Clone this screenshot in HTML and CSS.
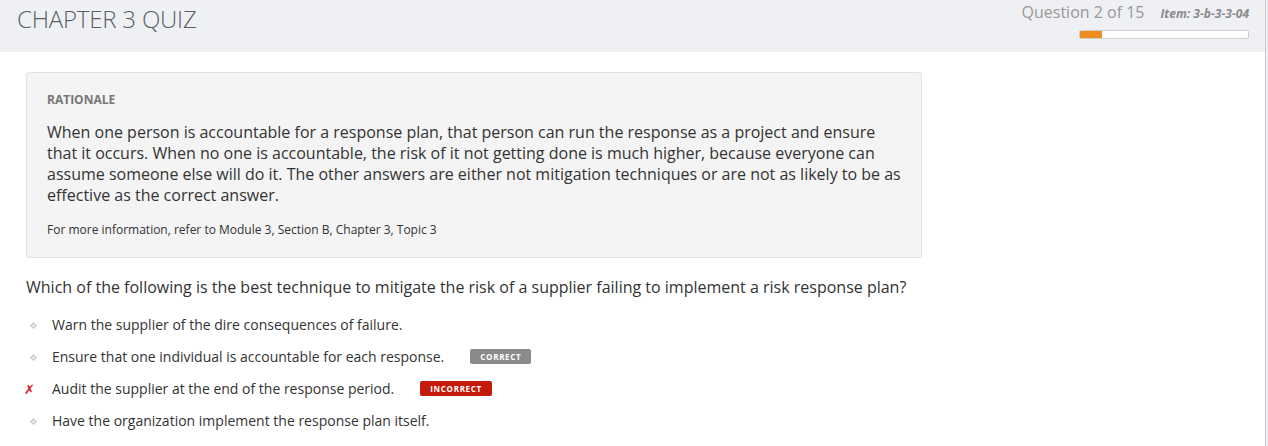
FILE: index.html
```html
<!DOCTYPE html>
<html lang="en">
<head>
<meta charset="utf-8">
<title>Chapter 3 Quiz</title>
<link rel="stylesheet" href="styles.css">
</head>
<body>
<div class="page">
  <header class="topbar">
    <h1 class="title">CHAPTER 3 QUIZ</h1>
    <div class="status">
      <div class="status-line">
        <span class="counter">Question 2 of 15</span>
        <span class="item">Item: 3-b-3-3-04</span>
      </div>
      <div class="progress"><div class="progress-fill" style="width:13.3%"></div></div>
    </div>
  </header>
  <main class="content">
    <section class="rationale">
      <h2 class="rationale-title">RATIONALE</h2>
      <p class="rationale-text">When one person is accountable for a response plan, that person can run the response as a project and ensure that it occurs. When no one is accountable, the risk of it not getting done is much higher, because everyone can assume someone else will do it. The other answers are either not mitigation techniques or are not as likely to be as effective as the correct answer.</p>
      <p class="rationale-ref">For more information, refer to Module 3, Section B, Chapter 3, Topic 3</p>
    </section>
    <p class="question">Which of the following is the best technique to mitigate the risk of a supplier failing to implement a risk response plan?</p>
    <ul class="answers">
      <li class="answer"><span class="mark"><span class="dot"></span></span><span class="answer-text">Warn the supplier of the dire consequences of failure.</span></li>
      <li class="answer"><span class="mark"><span class="dot"></span></span><span class="answer-text">Ensure that one individual is accountable for each response.</span><span class="badge badge-correct">CORRECT</span></li>
      <li class="answer"><span class="mark mark-x">&#10007;</span><span class="answer-text">Audit the supplier at the end of the response period.</span><span class="badge badge-incorrect">INCORRECT</span></li>
      <li class="answer"><span class="mark"><span class="dot"></span></span><span class="answer-text">Have the organization implement the response plan itself.</span></li>
    </ul>
  </main>
</div>
</body>
</html>
```

FILE: styles.css
```css
* { box-sizing: border-box; }
html, body { margin: 0; padding: 0; }
body {
  font-family: "Open Sans", "Liberation Sans", sans-serif;
  color: #333;
  background: #eef0f4;
  width: 1268px;
  height: 446px;
  overflow: hidden;
}
.page {
  width: 1266px;
  height: 446px;
  border-right: 1px solid #c9c9c9;
  background: #fff;
}
.topbar {
  height: 52px;
  background: #eef0f4;
  display: flex;
  justify-content: space-between;
  align-items: flex-start;
  padding: 0 16px 0 17px;
}
.title {
  margin: 0;
  padding-top: 3px;
  font-size: 24px;
  font-weight: 300;
  color: #5a5f66;
  line-height: 32px;
  letter-spacing: -0.2px;
}
.status {
  display: flex;
  flex-direction: column;
  align-items: flex-end;
  padding-top: 1px;
}
.status-line {
  display: flex;
  align-items: baseline;
  gap: 16px;
  height: 22px;
}
.counter {
  font-size: 16px;
  color: #999;
  line-height: 22px;
}
.item {
  font-size: 12px;
  font-weight: 700;
  font-style: italic;
  color: #8a8a8a;
  letter-spacing: 0;
}
.progress {
  margin-top: 7px;
  width: 170px;
  height: 9px;
  border: 1px solid #cfcfcf;
  border-radius: 2px;
  background: #fff;
  overflow: hidden;
}
.progress-fill {
  height: 100%;
  background: #f28b1e;
}
.content {
  padding: 20px 0 0 26px;
}
.rationale {
  width: 896px;
  background: #f4f4f4;
  border: 1px solid #e2e2e2;
  border-radius: 3px;
  padding: 18px 20px 19px 20px;
}
.rationale-title {
  margin: 0;
  font-size: 12px;
  font-weight: 700;
  color: #777;
  line-height: 17px;
}
.rationale-text {
  margin: 14px 0 0;
  font-size: 16px;
  line-height: 21px;
  color: #333;
}
.rationale-ref {
  margin: 15px 0 0;
  font-size: 12px;
  line-height: 17px;
  color: #333;
}
.question {
  margin: 18px 0 0;
  font-size: 16px;
  line-height: 22px;
  color: #333;
}
.answers {
  list-style: none;
  margin: 11px 0 0;
  padding: 0;
}
.answer {
  display: flex;
  align-items: center;
  height: 32px;
  font-size: 14px;
  color: #333;
}
.mark {
  width: 26px;
  flex: none;
  display: flex;
  align-items: center;
}
.dot {
  display: block;
  width: 5px;
  height: 5px;
  margin-left: 5px;
  border: 1.5px solid #c8c8c8;
  background: #e6e6e6;
  transform: rotate(45deg);
}
.mark-x {
  font-size: 13px;
  font-style: italic;
  font-weight: 700;
  color: #e0191b;
  font-family: "DejaVu Sans", sans-serif;
  padding-left: 0;
  margin-left: -2px;
  width: 28px;
}
.answer-text {
  line-height: 20px;
}
.badge {
  display: inline-block;
  margin-left: 26px;
  height: 15px;
  padding: 0 10px;
  font-size: 8px;
  font-weight: 700;
  letter-spacing: 0.7px;
  color: #fff;
  line-height: 15px;
  border-radius: 2px;
  position: relative;
  top: -1px;
}
.badge-correct { background: #8a8a8a; }
.badge-incorrect { background: #c51a0a; }
```
